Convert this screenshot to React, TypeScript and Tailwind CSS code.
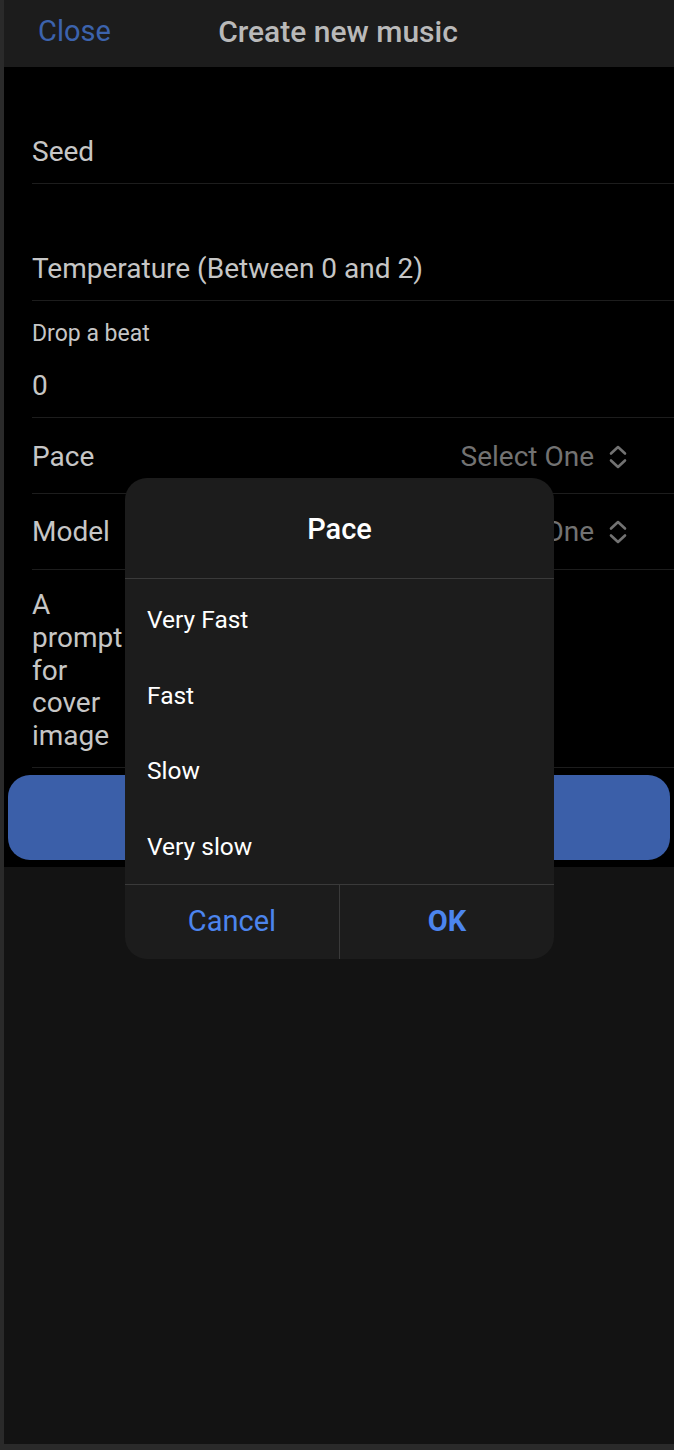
import React from 'react';

const font = { fontFamily: 'Roboto, "Noto Sans", sans-serif' };

const Chevrons: React.FC = () => (
  <svg width="20" height="26" viewBox="0 0 20 26" fill="none" stroke="currentColor" strokeWidth="2.6" strokeLinecap="round" strokeLinejoin="round">
    <path d="M3 9.5 L10 3 L17 9.5" />
    <path d="M3 16.5 L10 23 L17 16.5" />
  </svg>
);

const paceOptions = ['Very Fast', 'Fast', 'Slow', 'Very slow'];

export default function App() {
  return (
    <div className="w-[674px] h-[1450px] bg-[#2a2a2a] pl-[4px] pb-[6px]" style={font}>
      <div className="relative h-full flex flex-col bg-[#131313]">
        {/* header */}
        <div className="h-[67px] bg-[#1c1c1c] relative flex items-center pb-[4px]">
          <span className="ml-[34px] text-[29px] text-[#3c63ad]">Close</span>
          <span className="absolute left-0 right-0 text-center text-[30px] font-medium text-[#b9b9b9] pr-[2px]">
            Create new music
          </span>
        </div>

        {/* form */}
        <div className="bg-black pb-[7px]">
          <div className="ml-[28px] border-b border-[#1d1d1d] h-[117px] flex items-end pb-[13px]">
            <span className="text-[28px] text-[#c6c6c6] leading-[36px]">Seed</span>
          </div>
          <div className="ml-[28px] border-b border-[#1d1d1d] h-[117px] flex items-end pb-[13px]">
            <span className="text-[28px] text-[#c6c6c6] leading-[36px]">Temperature (Between 0 and 2)</span>
          </div>
          <div className="ml-[28px] border-b border-[#1d1d1d] h-[117px] flex flex-col pt-[20px]">
            <span className="text-[23px] text-[#c6c6c6] leading-[26px]">Drop a beat</span>
            <span className="text-[28px] text-[#c6c6c6] leading-[36px] mt-[21px]">0</span>
          </div>
          <div className="ml-[28px] border-b border-[#1d1d1d] h-[76px] flex items-center justify-between pr-[46px] pt-[2px]">
            <span className="text-[28px] text-[#c6c6c6]">Pace</span>
            <span className="flex items-center gap-[14px] text-[28px] text-[#727272]">
              Select One <Chevrons />
            </span>
          </div>
          <div className="ml-[28px] border-b border-[#1d1d1d] h-[76px] flex items-center justify-between pr-[46px]">
            <span className="text-[28px] text-[#c6c6c6]">Model</span>
            <span className="flex items-center gap-[14px] text-[28px] text-[#727272]">
              Select One <Chevrons />
            </span>
          </div>
          <div className="ml-[28px] border-b border-[#1d1d1d] h-[198px] flex items-start pt-[19px]">
            <span className="w-[104px] text-[28px] text-[#c6c6c6] leading-[32.75px]">A prompt for cover image</span>
          </div>
          <div className="mx-[4px] mt-[7px] h-[85px] rounded-[22px] bg-[#3b5fa9]" />
        </div>

        <div className="flex-1 bg-[#131313]" />

        {/* picker dialog */}
        <div className="absolute left-[121px] top-[478px] w-[429px] rounded-[22px] bg-[#1c1c1c] flex flex-col overflow-hidden">
          <div className="h-[101px] flex items-center justify-center border-b border-[#3a3a3a] pt-[3px]">
            <span className="text-[29px] font-medium text-white">Pace</span>
          </div>
          <div className="flex flex-col pt-[3px]">
            {paceOptions.map((opt) => (
              <div key={opt} className="h-[75.5px] flex items-center pl-[22px] pt-[2px] text-[24.5px] text-white">
                {opt}
              </div>
            ))}
          </div>
          <div className="h-[75px] flex border-t border-[#3a3a3a]">
            <div className="flex-1 flex items-center justify-center border-r border-[#3a3a3a] text-[29px] text-[#4c85ee]">
              Cancel
            </div>
            <div className="flex-1 flex items-center justify-center text-[29px] font-bold text-[#4c85ee]">
              OK
            </div>
          </div>
        </div>
      </div>
    </div>
  );
}
